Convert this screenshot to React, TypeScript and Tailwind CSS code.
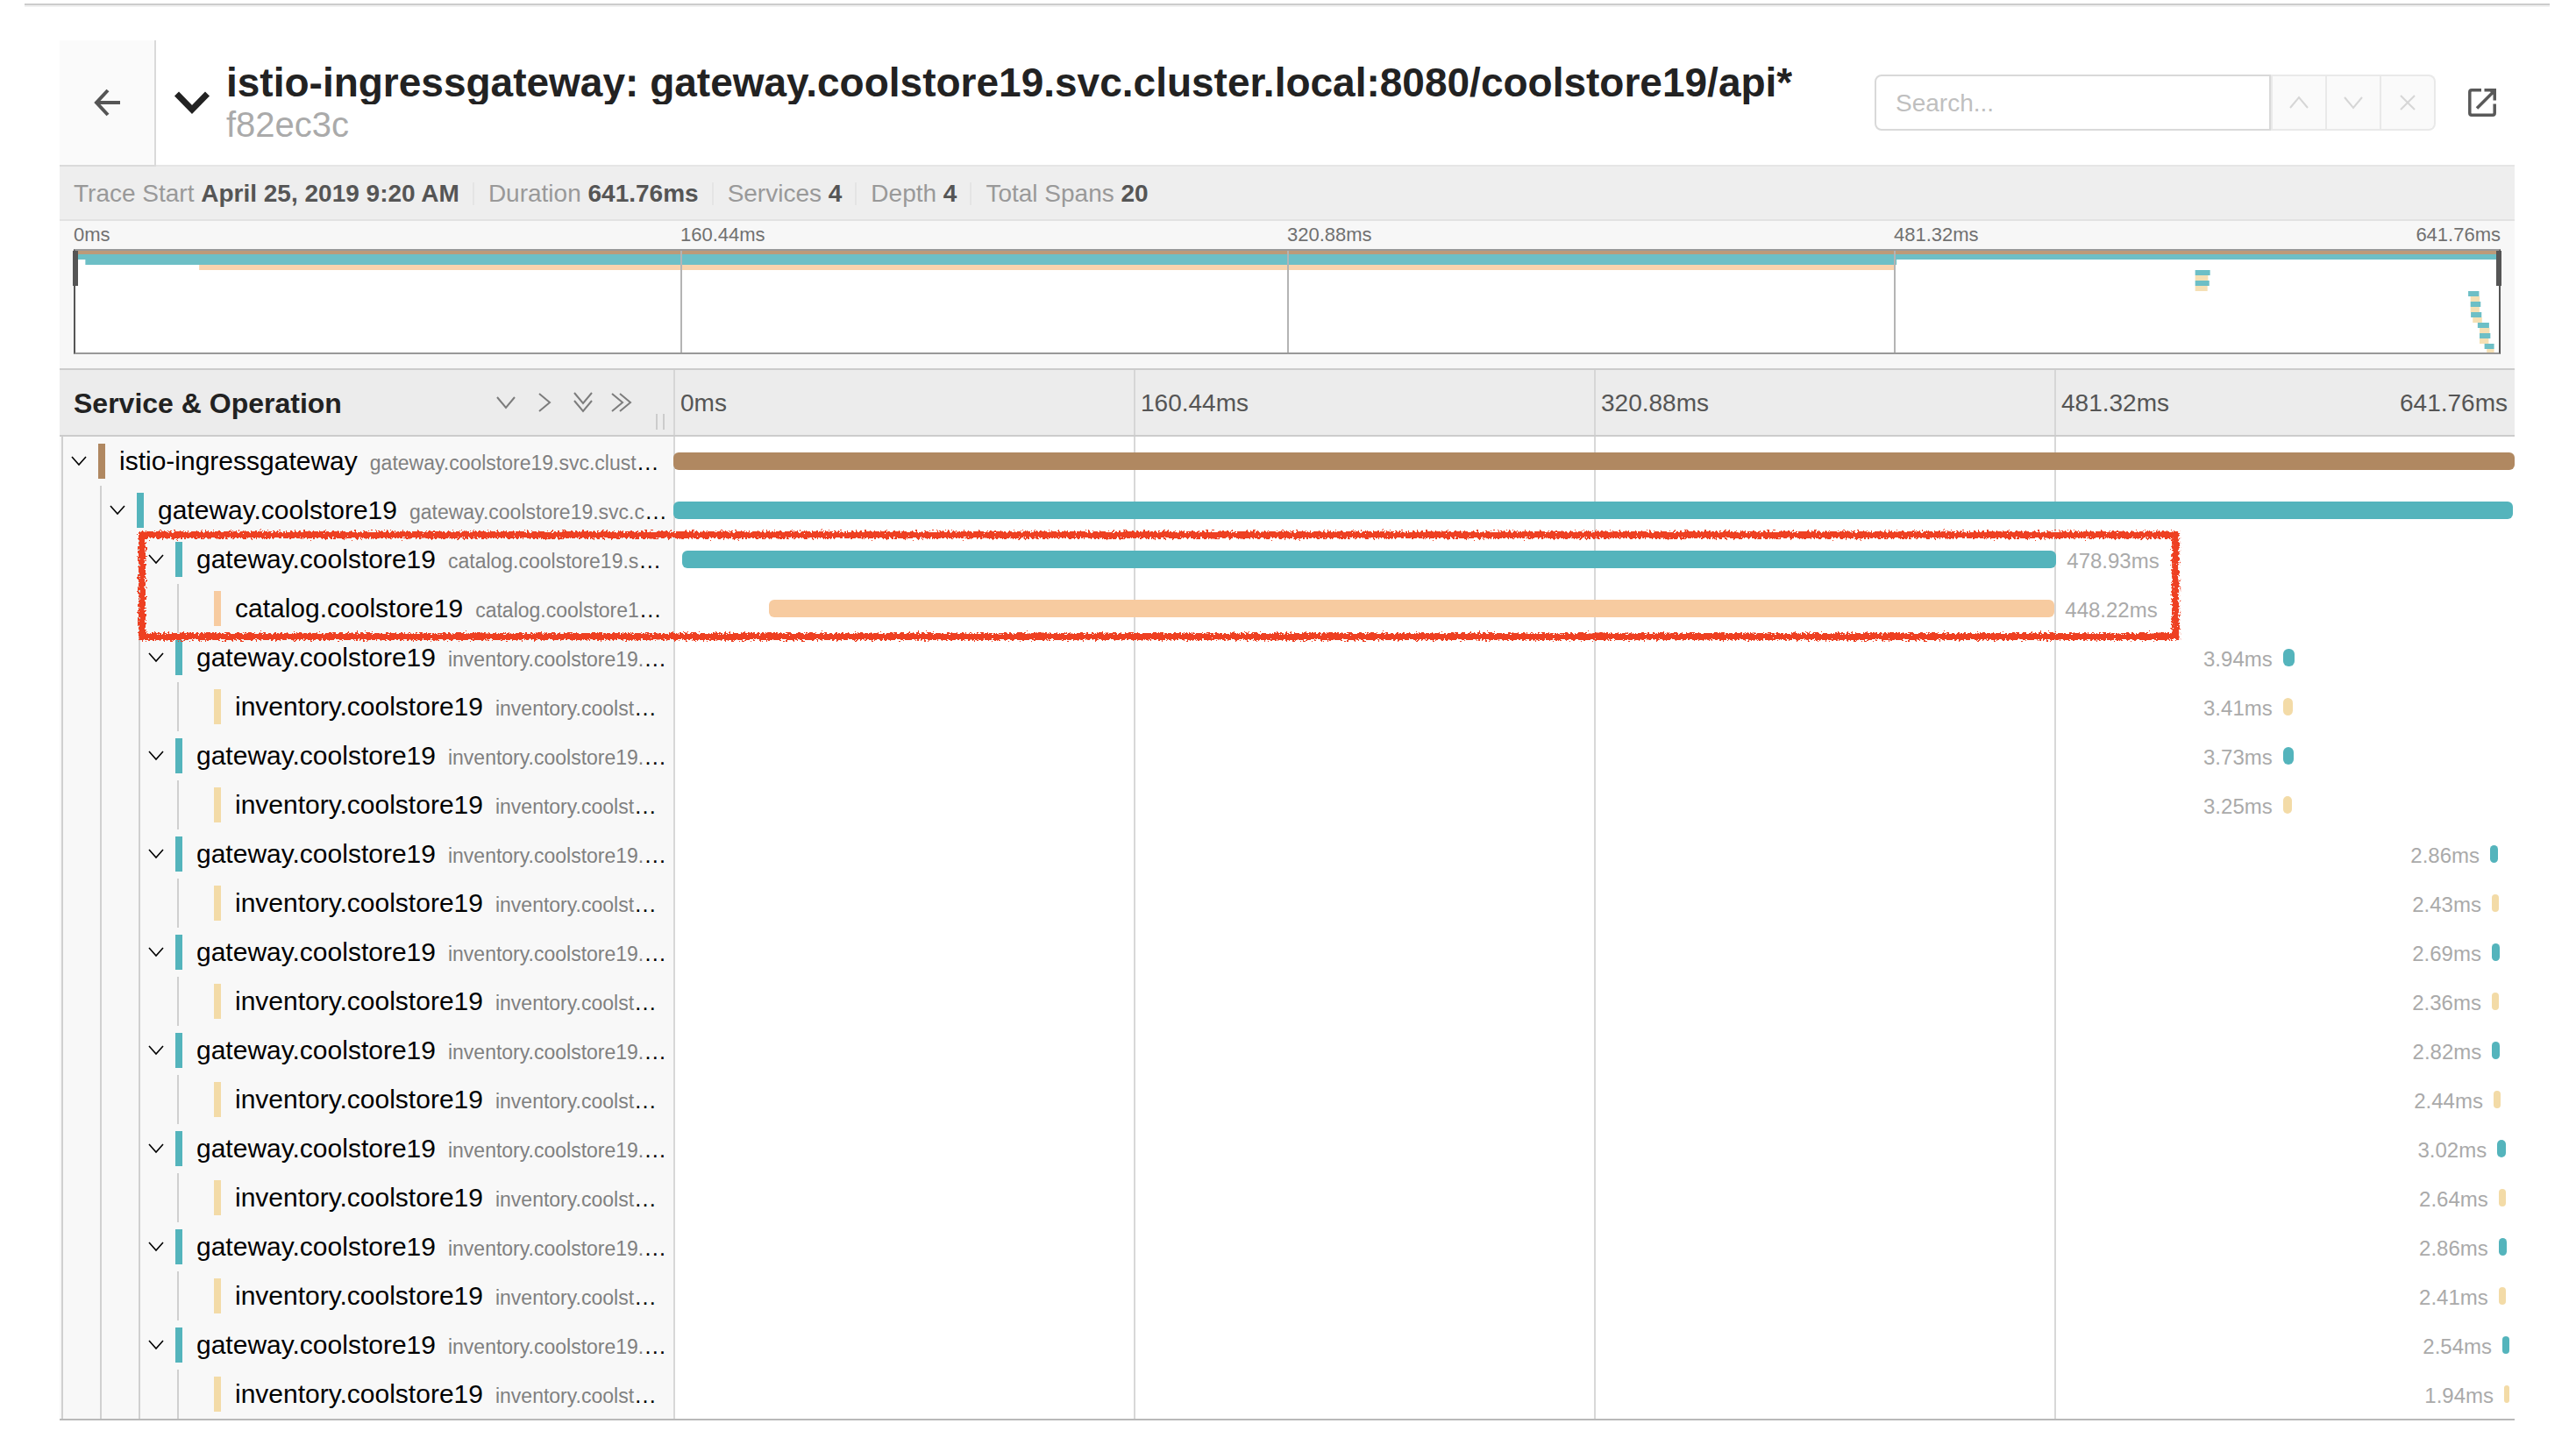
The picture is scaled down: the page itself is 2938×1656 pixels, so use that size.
import type { ReactNode } from "react";

const TOTAL_MS = 641.76;
const BROWN = "#b08861";
const TEAL = "#54b4bc";
const ORANGE = "#f7cba0";
const YELLOW = "#f3dba7";

type Span = {
  depth: number;
  service: string;
  operation: string;
  color: string;
  start: number;
  duration: number;
  label?: "left" | "right";
};

const call = (start: number, duration: number): Span => ({
  depth: 2,
  service: "gateway.coolstore19",
  operation: "inventory.coolstore19.",
  color: TEAL,
  start,
  duration,
  label: "left",
});

const inventory = (start: number, duration: number): Span => ({
  depth: 3,
  service: "inventory.coolstore19",
  operation: "inventory.coolst",
  color: YELLOW,
  start,
  duration,
  label: "left",
});

const spans: Span[] = [
  { depth: 0, service: "istio-ingressgateway", operation: "gateway.coolstore19.svc.clust", color: BROWN, start: 0, duration: 641.76 },
  { depth: 1, service: "gateway.coolstore19", operation: "gateway.coolstore19.svc.c", color: TEAL, start: 0, duration: 641.2 },
  { depth: 2, service: "gateway.coolstore19", operation: "catalog.coolstore19.s", color: TEAL, start: 3.1, duration: 478.93, label: "right" },
  { depth: 3, service: "catalog.coolstore19", operation: "catalog.coolstore1", color: ORANGE, start: 33.2, duration: 448.22, label: "right" },
  call(561, 3.94),
  inventory(561, 3.41),
  call(561, 3.73),
  inventory(561, 3.25),
  call(633.2, 2.86),
  inventory(633.8, 2.43),
  call(633.8, 2.69),
  inventory(633.8, 2.36),
  call(633.9, 2.82),
  inventory(634.4, 2.44),
  call(635.7, 3.02),
  inventory(636.2, 2.64),
  call(636.2, 2.86),
  inventory(636.2, 2.41),
  call(637.5, 2.54),
  inventory(638.1, 1.94),
];

const ticks = ["0ms", "160.44ms", "320.88ms", "481.32ms"];
const lastTick = "641.76ms";

function Stroke({ w, h, d, sw }: { w: number; h: number; d: string; sw: number }) {
  return (
    <svg width={w} height={h} viewBox={`0 0 ${w} ${h}`} fill="none" stroke="currentColor" strokeWidth={sw} aria-hidden="true">
      <path d={d} />
    </svg>
  );
}

function Header() {
  return (
    <header className="flex h-36 items-stretch border-b-2 border-[#e5e5e5]">
      <button aria-label="Back to search" className="-mb-0.5 flex w-[110px] shrink-0 items-center justify-center border-r-2 border-b-2 border-[#dadada] bg-[#fafafa] text-[#555]">
        <Stroke w={30} h={32} sw={4} d="M16 2L3 16L16 30M3 16H30" />
      </button>
      <button className="flex min-w-0 items-center gap-[18px] pl-5 text-left text-[#222]">
        <Stroke w={42} h={28} sw={7} d="M3.5 4L21 22L38.5 4" />
        <span className="flex min-w-0 flex-col">
          <span className="truncate text-[46px] leading-[50px] font-bold">
            istio-ingressgateway: gateway.coolstore19.svc.cluster.local:8080/coolstore19/api*
          </span>
          <span className="text-[40px] leading-[46px] text-[#aaa]">f82ec3c</span>
        </span>
      </button>
      <div className="ml-auto flex shrink-0 items-center pr-5">
        <div className="flex h-16">
          <input
            type="text"
            aria-label="Search"
            placeholder="Search..."
            className="w-[452px] rounded-l-lg border-2 border-[#d9d9d9] bg-white px-[22px] pt-0.5 text-[28px] text-[#333] outline-none placeholder:text-[#bfbfbf]"
          />
          <button aria-label="Previous match" className="flex w-16 items-center justify-center border-2 border-[#e9e9e9] bg-[#fafafa] text-[#d6d6d6]">
            <Stroke w={22} h={16} sw={2} d="M1 14L11 2L21 14" />
          </button>
          <button aria-label="Next match" className="flex w-[62px] items-center justify-center border-2 border-l-0 border-[#e9e9e9] bg-[#fafafa] text-[#d6d6d6]">
            <Stroke w={22} h={16} sw={2} d="M1 2L11 14L21 2" />
          </button>
          <button aria-label="Clear search" className="flex w-[62px] items-center justify-center rounded-r-lg border-2 border-l-0 border-[#e9e9e9] bg-[#fafafa] text-[#d6d6d6]">
            <Stroke w={18} h={18} sw={2} d="M1 1L17 17M17 1L1 17" />
          </button>
        </div>
        <a href="#trace" aria-label="Open in new window" className="ml-9 flex text-[#595959]">
          <svg width="34" height="34" viewBox="-1 -1 34 34" fill="none" stroke="currentColor" strokeWidth="3.5" aria-hidden="true">
            <path d="M15 1.8H4Q1.8 1.8 1.8 4V28Q1.8 30.2 4 30.2H28Q30.2 30.2 30.2 28V17.5" />
            <path d="M10 22.5L28 4.5" />
            <path d="M18.5 0H32V13.5H28.5V7L25 3.5H18.5Z" fill="currentColor" stroke="none" />
          </svg>
        </a>
      </div>
    </header>
  );
}

const facts: [string, string][] = [
  ["Trace Start", "April 25, 2019 9:20 AM"],
  ["Duration", "641.76ms"],
  ["Services", "4"],
  ["Depth", "4"],
  ["Total Spans", "20"],
];

function Summary() {
  return (
    <ul className="flex h-[62px] items-center border-b-2 border-[#e2e2e2] bg-[#eee] px-4 pt-0.5 text-[28px] leading-[26px] text-[#999]">
      {facts.map(([name, value], i) => (
        <li key={name} className={i < facts.length - 1 ? "mr-4 border-r-2 border-[#e4e4e4] pr-[15px] whitespace-pre" : "whitespace-pre"}>
          {name} <strong className="font-bold text-[#555]">{value}</strong>
        </li>
      ))}
    </ul>
  );
}

function Minimap() {
  return (
    <section aria-label="Trace overview" className="border-b-2 border-[#ccc] bg-[#f7f7f7] px-4 pb-4">
      <div className="grid h-8 grid-cols-4 items-center text-[22px] leading-8 text-[#717171]">
        {ticks.map((t, i) => (
          <div key={t} className="flex justify-between">
            <span>{t}</span>
            {i === 3 && <span>{lastTick}</span>}
          </div>
        ))}
      </div>
      <div className="relative h-[120px] bg-white">
        <svg className="absolute inset-0 h-full w-full" viewBox={`0 0 ${TOTAL_MS} 120`} preserveAspectRatio="none" aria-hidden="true">
          {spans.map((s, i) => (
            <rect key={i} x={s.start} y={i * 6} width={s.duration} height="6" fill={s.color} opacity="0.85" />
          ))}
        </svg>
        <div className="absolute inset-0 grid grid-cols-4">
          {ticks.map((t, i) => (
            <div key={t} className={i ? "border-l-2 border-[#b4b4b4]" : ""} />
          ))}
        </div>
        <div className="absolute inset-0 border-2 border-x-[#555] border-y-[#999]" />
        <div className="absolute top-0.5 -left-px h-10 w-1.5 bg-[#555]" />
        <div className="absolute top-0.5 -right-px h-10 w-1.5 bg-[#555]" />
      </div>
    </section>
  );
}

function HeadButton({ label, children }: { label: string; children: ReactNode }) {
  return (
    <button aria-label={label} className="flex h-11 w-11 items-center justify-center text-[#7c7c7c]">
      {children}
    </button>
  );
}

function TimelineHead() {
  return (
    <div className="flex h-[76px] border-b-2 border-[#ccc] bg-[#ececec]">
      <div className="flex w-1/4 items-center pl-4">
        <h2 className="truncate pt-0.5 text-[32px] leading-10 font-bold text-[#222]">Service &amp; Operation</h2>
        <div className="ml-auto flex shrink-0">
          <HeadButton label="Expand one level">
            <Stroke w={22} h={16} sw={2} d="M1 2L11 14L21 2" />
          </HeadButton>
          <HeadButton label="Collapse one level">
            <Stroke w={16} h={22} sw={2} d="M2 1L14 11L2 21" />
          </HeadButton>
          <HeadButton label="Expand all">
            <Stroke w={22} h={24} sw={2} d="M1 1L11 13L21 1M1 10L11 22L21 10" />
          </HeadButton>
          <HeadButton label="Collapse all">
            <Stroke w={24} h={22} sw={2} d="M1 1L13 11L1 21M10 1L22 11L10 21" />
          </HeadButton>
        </div>
        <div className="mr-2.5 mb-1.5 ml-[17px] h-[18px] w-2.5 shrink-0 cursor-col-resize self-end border-x-2 border-[#ccc]" />
      </div>
      <div className="grid flex-1 grid-cols-4 text-[28px] text-[#555]">
        {ticks.map((t, i) => (
          <div key={t} className="flex items-center justify-between border-l-2 border-[#d6d6d6] pt-0.5 pr-2 pl-1.5">
            <span>{t}</span>
            {i === 3 && <span>{lastTick}</span>}
          </div>
        ))}
      </div>
    </div>
  );
}

function SpanRow({ span }: { span: Span }) {
  const leaf = span.depth === 3;
  const left = `${(span.start / TOTAL_MS) * 100}%`;
  const width = `${(span.duration / TOTAL_MS) * 100}%`;
  const right = `${100 - (span.start / TOTAL_MS) * 100}%`;
  return (
    <div className="flex h-14">
      <div className="flex w-1/4 items-center overflow-hidden bg-[#f8f8f8]">
        {Array.from({ length: span.depth + 1 }, (_, i) => (
          <div key={i} className="flex h-full w-11 shrink-0 items-center pl-0.5">
            <div className="h-full w-0.5 shrink-0 bg-[#d0d0d0]" />
            {i === span.depth && !leaf && (
              <button aria-label={`Collapse ${span.service}`} className="flex h-full flex-1 items-center justify-center pr-1 text-black">
                <Stroke w={18} h={12} sw={1.6} d="M1 1L9 10L17 1" />
              </button>
            )}
          </div>
        ))}
        <a href="#span" className="flex h-10 items-baseline gap-3.5 border-l-8 pl-4 text-[30px] leading-10 whitespace-nowrap text-black" style={{ borderColor: span.color }}>
          <span>{span.service}</span>
          <span className="text-[26px]">
            <small className="text-[23px] text-[#808080]">{span.operation}</small>…
          </span>
        </a>
      </div>
      <div className="relative grid flex-1 grid-cols-4">
        {ticks.map((t) => (
          <div key={t} className="border-l-2 border-[#d8d8d8]" />
        ))}
        <div className="absolute inset-y-[18px] rounded-md" style={{ left, width, backgroundColor: span.color }}>
          {span.label === "right" && (
            <span className="absolute -top-1 left-full ml-3 text-[24px] leading-8 text-[#aaa]">{span.duration}ms</span>
          )}
        </div>
        {span.label === "left" && (
          <span className="absolute top-3.5 mr-3 text-[24px] leading-8 text-[#aaa]" style={{ right }}>
            {span.duration}ms
          </span>
        )}
      </div>
    </div>
  );
}

function Highlight() {
  return (
    <svg className="pointer-events-none absolute top-[103px] left-[86px] h-[132px] w-[83.4%]" aria-hidden="true">
      <defs>
        <filter id="crayon" x="0" y="0" width="100%" height="100%" filterUnits="userSpaceOnUse">
          <feTurbulence type="fractalNoise" baseFrequency="0.4" numOctaves="3" seed="4" result="noise" />
          <feDisplacementMap in="SourceGraphic" in2="noise" scale="8" xChannelSelector="R" yChannelSelector="G" />
        </filter>
      </defs>
      <g filter="url(#crayon)">
        <rect x="8" y="9" style={{ width: "calc(100% - 16px)", height: "calc(100% - 16px)" }} fill="none" stroke="#ee4023" strokeWidth="8" />
      </g>
    </svg>
  );
}

export default function App() {
  return (
    <div className="min-h-screen bg-white pt-1 font-['Liberation_Sans',Arial,sans-serif]">
      <div className="mr-[30px] ml-7 h-1 border-t-2 border-[#ccc] bg-[#f1f1f1]" />
      <main className="mt-[38px] mr-[70px] ml-[68px]">
        <Header />
        <Summary />
        <Minimap />
        <TimelineHead />
        <div className="relative border-b-2 border-[#b9b9b9]">
          {spans.map((s, i) => (
            <SpanRow key={i} span={s} />
          ))}
          <Highlight />
        </div>
      </main>
    </div>
  );
}
